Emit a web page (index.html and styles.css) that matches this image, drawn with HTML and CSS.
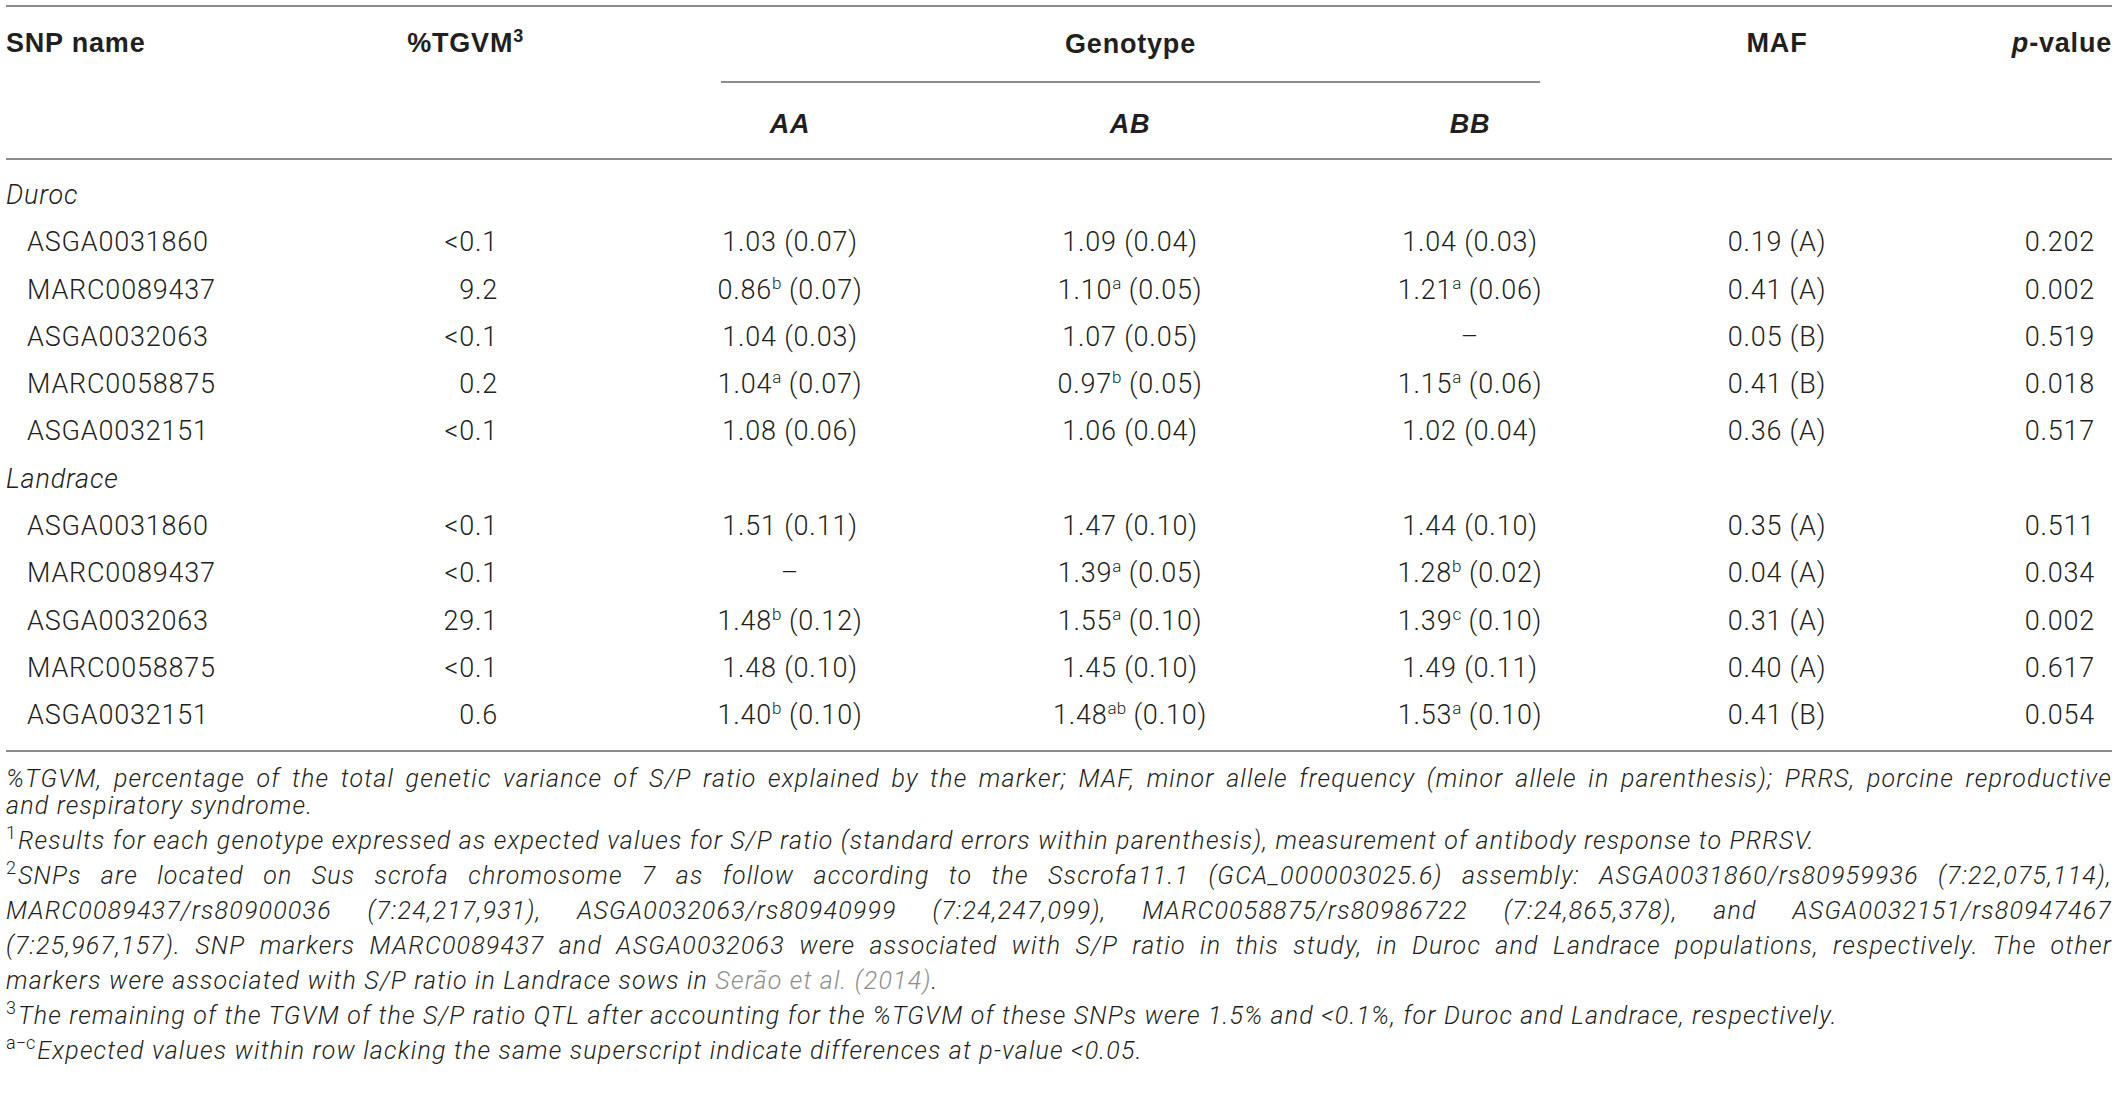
FILE: index.html
```html
<!DOCTYPE html>
<html lang="en">
<head>
<meta charset="utf-8">
<title>SNP genotype table</title>
<link rel="stylesheet" href="styles.css">
</head>
<body>
<div class="page">
<table class="snp">
<colgroup>
<col class="c-name"><col class="c-tgvm"><col class="c-g"><col class="c-g"><col class="c-g"><col class="c-maf"><col class="c-p">
</colgroup>
<thead>
<tr class="hr1">
<th class="rs th-name" rowspan="2">SNP name</th>
<th class="rs th-tgvm" rowspan="2">%TGVM<sup>3</sup></th>
<th class="th-geno" colspan="3"><div class="geno-label">Genotype</div></th>
<th class="rs th-maf" rowspan="2">MAF</th>
<th class="rs th-p" rowspan="2"><i>p</i>-value</th>
</tr>
<tr class="hr2">
<th><i>AA</i></th><th><i>AB</i></th><th><i>BB</i></th>
</tr>
</thead>
<tbody>
<tr class="grp first"><td colspan="7">Duroc</td></tr>
<tr><td class="nm">ASGA0031860</td><td class="tg">&lt;0.1</td><td class="gv">1.03 (0.07)</td><td class="gv">1.09 (0.04)</td><td class="gv">1.04 (0.03)</td><td class="mf">0.19 (A)</td><td class="pv">0.202</td></tr>
<tr><td class="nm">MARC0089437</td><td class="tg">9.2</td><td class="gv">0.86<sup>b</sup> (0.07)</td><td class="gv">1.10<sup>a</sup> (0.05)</td><td class="gv">1.21<sup>a</sup> (0.06)</td><td class="mf">0.41 (A)</td><td class="pv">0.002</td></tr>
<tr><td class="nm">ASGA0032063</td><td class="tg">&lt;0.1</td><td class="gv">1.04 (0.03)</td><td class="gv">1.07 (0.05)</td><td class="gv">–</td><td class="mf">0.05 (B)</td><td class="pv">0.519</td></tr>
<tr><td class="nm">MARC0058875</td><td class="tg">0.2</td><td class="gv">1.04<sup>a</sup> (0.07)</td><td class="gv">0.97<sup>b</sup> (0.05)</td><td class="gv">1.15<sup>a</sup> (0.06)</td><td class="mf">0.41 (B)</td><td class="pv">0.018</td></tr>
<tr><td class="nm">ASGA0032151</td><td class="tg">&lt;0.1</td><td class="gv">1.08 (0.06)</td><td class="gv">1.06 (0.04)</td><td class="gv">1.02 (0.04)</td><td class="mf">0.36 (A)</td><td class="pv">0.517</td></tr>
<tr class="grp"><td colspan="7">Landrace</td></tr>
<tr><td class="nm">ASGA0031860</td><td class="tg">&lt;0.1</td><td class="gv">1.51 (0.11)</td><td class="gv">1.47 (0.10)</td><td class="gv">1.44 (0.10)</td><td class="mf">0.35 (A)</td><td class="pv">0.511</td></tr>
<tr><td class="nm">MARC0089437</td><td class="tg">&lt;0.1</td><td class="gv">–</td><td class="gv">1.39<sup>a</sup> (0.05)</td><td class="gv">1.28<sup>b</sup> (0.02)</td><td class="mf">0.04 (A)</td><td class="pv">0.034</td></tr>
<tr><td class="nm">ASGA0032063</td><td class="tg">29.1</td><td class="gv">1.48<sup>b</sup> (0.12)</td><td class="gv">1.55<sup>a</sup> (0.10)</td><td class="gv">1.39<sup>c</sup> (0.10)</td><td class="mf">0.31 (A)</td><td class="pv">0.002</td></tr>
<tr><td class="nm">MARC0058875</td><td class="tg">&lt;0.1</td><td class="gv">1.48 (0.10)</td><td class="gv">1.45 (0.10)</td><td class="gv">1.49 (0.11)</td><td class="mf">0.40 (A)</td><td class="pv">0.617</td></tr>
<tr class="last"><td class="nm">ASGA0032151</td><td class="tg">0.6</td><td class="gv">1.40<sup>b</sup> (0.10)</td><td class="gv">1.48<sup>ab</sup> (0.10)</td><td class="gv">1.53<sup>a</sup> (0.10)</td><td class="mf">0.41 (B)</td><td class="pv">0.054</td></tr>
</tbody>
</table>

<div class="notes">
<div class="fn fn1">
<div class="jl">%TGVM, percentage of the total genetic variance of S/P ratio explained by the marker; MAF, minor allele frequency (minor allele in parenthesis); PRRS, porcine reproductive</div>
<div>and respiratory syndrome.</div>
</div>
<div class="fn">
<div><span class="mk">1</span>Results for each genotype expressed as expected values for S/P ratio (standard errors within parenthesis), measurement of antibody response to PRRSV.</div>
</div>
<div class="fn">
<div class="jl"><span class="mk">2</span>SNPs are located on Sus scrofa chromosome 7 as follow according to the Sscrofa11.1 (GCA_000003025.6) assembly: ASGA0031860/rs80959936 (7:22,075,114),</div>
<div class="jl">MARC0089437/rs80900036 (7:24,217,931), ASGA0032063/rs80940999 (7:24,247,099), MARC0058875/rs80986722 (7:24,865,378), and ASGA0032151/rs80947467</div>
<div class="jl">(7:25,967,157). SNP markers MARC0089437 and ASGA0032063 were associated with S/P ratio in this study, in Duroc and Landrace populations, respectively. The other</div>
<div>markers were associated with S/P ratio in Landrace sows in <span class="ref">Serão et al. (2014)</span>.</div>
</div>
<div class="fn">
<div><span class="mk">3</span>The remaining of the TGVM of the S/P ratio QTL after accounting for the %TGVM of these SNPs were 1.5% and &lt;0.1%, for Duroc and Landrace, respectively.</div>
</div>
<div class="fn">
<div><span class="mk">a−c</span>Expected values within row lacking the same superscript indicate differences at p-value &lt;0.05.</div>
</div>
</div>
</div>
</body>
</html>
```

FILE: styles.css
```css
* { box-sizing: border-box; margin: 0; padding: 0; }
html, body { background: #ffffff; }
body {
  font-family: Roboto, "Liberation Sans", Arial, sans-serif;
  font-weight: 300;
  color: #231f20;
}
.page { padding: 5px 0 0 6px; }

.snp {
  width: 2106px;
  table-layout: fixed;
  border-collapse: separate;
  border-spacing: 0;
  border-top: 2px solid #8c8c8c;
  border-bottom: 2px solid #8c8c8c;
}
.c-name { width: 294px; }
.c-tgvm { width: 320px; }
.c-g { width: 340px; }
.c-maf { width: 274px; }
.c-p { width: 198px; }

.snp th {
  font-family: "Liberation Sans", Arial, sans-serif;
  font-weight: 700;
  font-size: 27px;
  letter-spacing: 0.8px;
  color: #231f20;
  padding: 0;
  white-space: nowrap;
}
.snp th sup { font-size: 18px; vertical-align: super; line-height: 0; }
.hr1 th { vertical-align: top; line-height: 72px; }
.hr1 th.rs { border-bottom: 2px solid #8c8c8c; }
.snp th.th-name { text-align: left; }
.snp th.th-tgvm { text-align: right; padding-right: 96px; }
.snp th.th-maf { text-align: center; }
.snp th.th-p { text-align: right; }
.geno-label {
  line-height: 74px;
  border-bottom: 2px solid #8c8c8c;
  margin: 0 100px 0 101px;
  text-align: center;
}
.hr2 th {
  padding-top: 8px;
  line-height: 67px;
  text-align: center;
  border-bottom: 2px solid #8c8c8c;
}

.snp td {
  font-size: 27px;
  letter-spacing: 0.8px;
  line-height: 47.3px;
  padding: 0;
  white-space: nowrap;
  vertical-align: middle;
}
.snp td sup { font-size: 17px; vertical-align: super; line-height: 0; letter-spacing: 0; }
.snp .grp td { font-style: italic; text-align: left; }
.snp td.nm { padding-left: 21px; text-align: left; }
.snp td.tg { text-align: right; padding-right: 122px; }
.snp td.gv { text-align: center; }
.snp td.mf { text-align: center; }
.snp td.pv { text-align: right; padding-right: 17px; }
.snp .first td { padding-top: 12px; }
.snp .last td { padding-bottom: 10px; }

.notes {
  width: 2106px;
  margin-top: 13px;
  font-style: italic;
  font-weight: 300;
  font-size: 25px;
  letter-spacing: 1.2px;
  color: #231f20;
}
.fn { line-height: 35px; }
.fn1 { line-height: 27px; }
.fn1 + .fn { margin-top: 4px; }
.jl { text-align: justify; text-align-last: justify; }
.mk {
  font-style: normal;
  font-size: 18px;
  letter-spacing: 0;
  vertical-align: super;
  line-height: 0;
  margin-right: 2px;
}
.ref { color: #8e8e8e; }
```
